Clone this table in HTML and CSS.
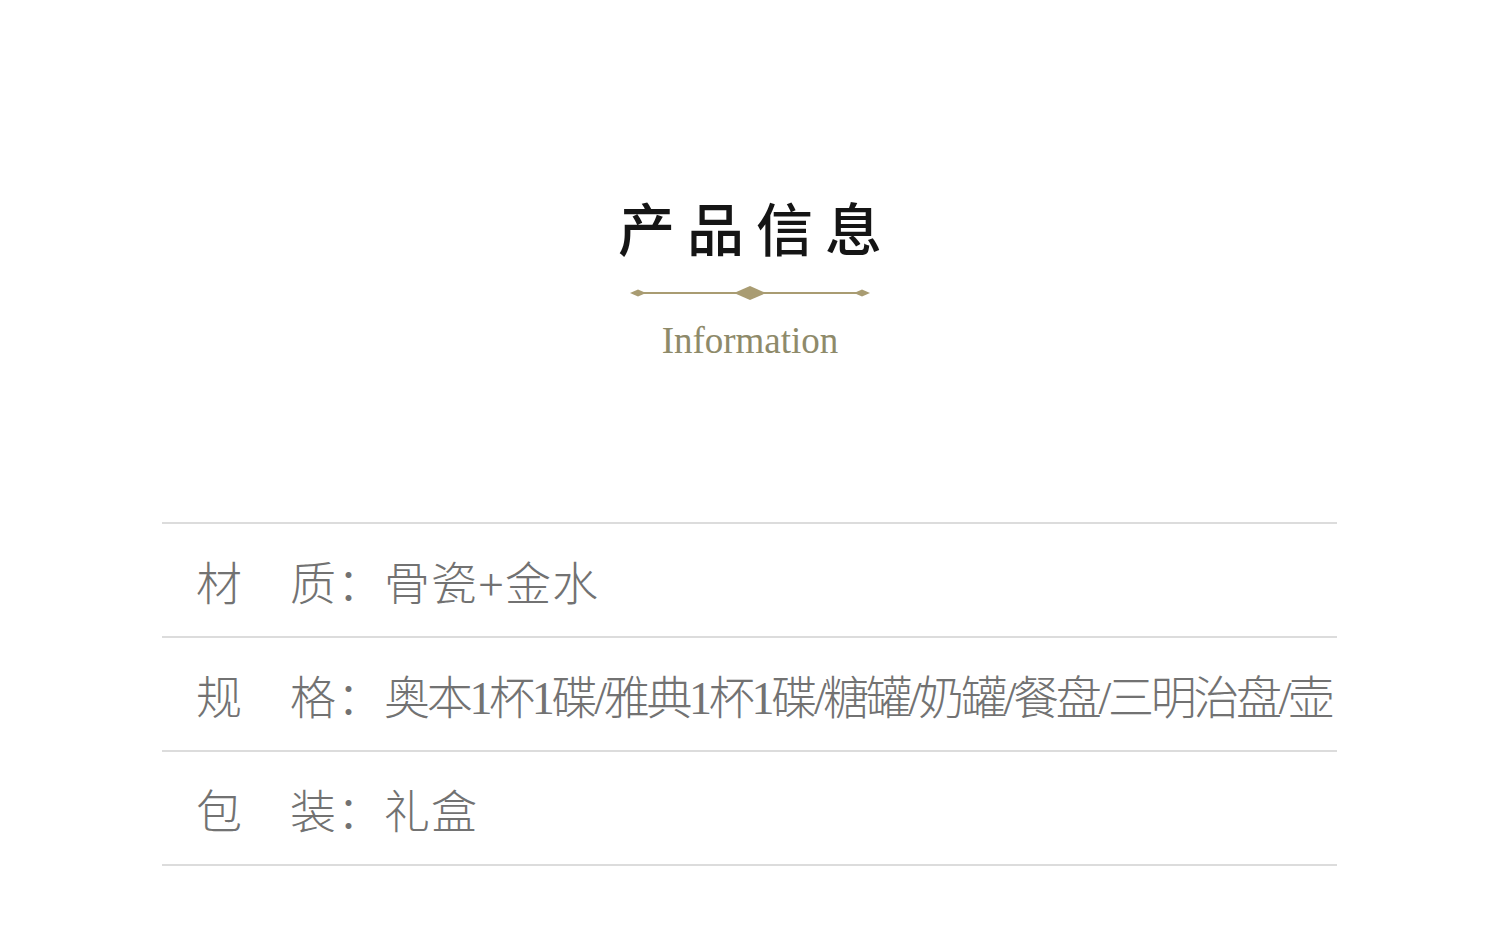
FILE: index.html
```html
<!DOCTYPE html>
<html lang="zh-CN">
<head>
<meta charset="utf-8">
<title>产品信息</title>
<link rel="stylesheet" href="styles.css">
</head>
<body>
<main class="page">
  <header class="heading">
    <h1 class="title">产品信息</h1>
    <svg class="divider" width="240" height="16" viewBox="0 0 240 16" aria-hidden="true">
      <line x1="4" y1="8" x2="236" y2="8" stroke="#a99c72" stroke-width="2"/>
      <polygon points="0,8 8,4.5 16,8 8,11.5" fill="#a99c72"/>
      <polygon points="224,8 232,4.5 240,8 232,11.5" fill="#a99c72"/>
      <polygon points="104,8 120,1 136,8 120,15" fill="#a99c72"/>
    </svg>
    <p class="subtitle">Information</p>
  </header>
  <section class="info">
    <div class="row">
      <span class="label">材　质：</span>
      <span class="value">骨瓷+金水</span>
    </div>
    <div class="row">
      <span class="label">规　格：</span>
      <span class="value value-tight">奥本1杯1碟/雅典1杯1碟/糖罐/奶罐/餐盘/三明治盘/壶</span>
    </div>
    <div class="row">
      <span class="label">包　装：</span>
      <span class="value">礼盒</span>
    </div>
  </section>
</main>
</body>
</html>
```

FILE: styles.css
```css
html, body {
  margin: 0;
  padding: 0;
  background: #ffffff;
}

.page {
  width: 1500px;
  height: 947px;
  overflow: hidden;
}

.heading {
  display: flex;
  flex-direction: column;
  align-items: center;
  padding-top: 197px;
}

.title {
  margin: 0;
  font-family: "Noto Sans CJK SC", sans-serif;
  font-weight: 500;
  font-size: 57px;
  line-height: 58px;
  letter-spacing: 12px;
  padding-left: 12px;
  color: #151515;
}

.divider {
  display: block;
  margin-top: 30px;
}

.subtitle {
  margin: 21px 0 0;
  font-family: "Liberation Serif", serif;
  font-size: 37px;
  line-height: 37px;
  color: #8e8a6a;
}

.info {
  margin: 163px 163px 0 162px;
  border-top: 2px solid #dcdcdc;
}

.row {
  display: flex;
  align-items: center;
  height: 112px;
  border-bottom: 2px solid #dcdcdc;
  padding-left: 34px;
  font-size: 46px;
  font-weight: 300;
  color: #727272;
  white-space: nowrap;
}

.label {
  font-family: "Noto Sans CJK SC", sans-serif;
  letter-spacing: 1px;
}

.value {
  font-family: "Liberation Serif", "Noto Sans CJK SC", serif;
  letter-spacing: 1px;
}

.value-tight {
  letter-spacing: -3.3px;
}
```
